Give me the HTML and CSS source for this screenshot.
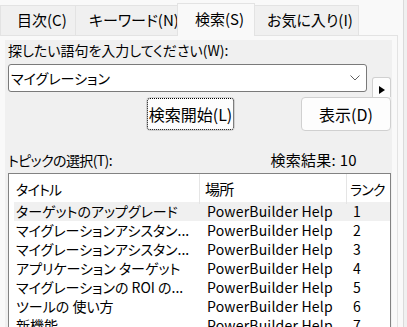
FILE: index.html
```html
<!DOCTYPE html>
<html lang="ja">
<head>
    <meta charset="UTF-8">
    <meta name="viewport" content="width=device-width, initial-scale=1.0">
    <title>ヘルプ検索</title>
    <link rel="stylesheet" href="styles.css">
</head>
<body>
<div class="dialog">
    <div class="tabs">
        <div class="tab">目次(C)</div>
        <div class="tab">キーワード(N)</div>
        <div class="tab active">検索(S)</div>
        <div class="tab">お気に入り(I)</div>
    </div>
    <div class="page">
        <div class="content">
            <label class="caption" for="word">探したい語句を入力してください(W):</label>
            <div class="search-row">
                <div class="combo" id="word">
                    <span>マイグレーション</span>
                    <svg width="10" height="6" viewBox="0 0 10 6"><path d="M0.5 0.5 L5 5 L9.5 0.5" fill="none" stroke="#606060" stroke-width="1"/></svg>
                </div>
                <button class="more" type="button">
                    <svg width="6" height="8" viewBox="0 0 6 8"><polygon points="0,0 6,4 0,8" fill="#000"/></svg>
                </button>
            </div>
            <div class="actions">
                <button class="btn btn-search focused" type="button">検索開始(L)</button>
                <button class="btn btn-show" type="button">表示(D)</button>
            </div>
            <div class="topic-row">
                <span class="topic">トピックの選択(T):</span>
                <span class="count">検索結果: 10</span>
            </div>
            <div class="list">
                <div class="list-head">
                    <span class="col-title">タイトル</span>
                    <span class="col-place">場所</span>
                    <span class="col-rank">ランク</span>
                </div>
                <div class="row hot"><span>ターゲットのアップグレード</span><span>PowerBuilder Help</span><span>1</span></div>
                <div class="row"><span>マイグレーションアシスタン...</span><span>PowerBuilder Help</span><span>2</span></div>
                <div class="row"><span>マイグレーションアシスタン...</span><span>PowerBuilder Help</span><span>3</span></div>
                <div class="row"><span>アプリケーション ターゲット</span><span>PowerBuilder Help</span><span>4</span></div>
                <div class="row"><span>マイグレーションの ROI の...</span><span>PowerBuilder Help</span><span>5</span></div>
                <div class="row"><span>ツールの 使い方</span><span>PowerBuilder Help</span><span>6</span></div>
                <div class="row"><span>新機能</span><span>PowerBuilder Help</span><span>7</span></div>
            </div>
        </div>
    </div>
</div>
<div class="frame"></div>
</body>
</html>
```

FILE: styles.css
```css
* {
    box-sizing: border-box;
}

html, body {
    height: 100%;
}

body {
    margin: 0;
    display: flex;
    overflow: hidden;
    background-color: #f0f0f0;
    font-family: "Noto Sans CJK JP", sans-serif;
    font-size: 16px;
    font-feature-settings: "palt";
    color: #000;
    white-space: nowrap;
}

.dialog {
    flex: none;
    width: 404px;
    background-color: #f9f9f9;
    border-right: 1px solid #dadada;
}

.tabs {
    display: flex;
    align-items: flex-end;
    height: 35px;
    font-size: 15px;
}

.tab {
    height: 30px;
    margin-right: -1px;
    border: 1px solid #e3e3e3;
    border-bottom: none;
    background-color: #f0f0f0;
    line-height: 28px;
}

.tab:nth-child(1) { width: 76px; padding-left: 16px; }
.tab:nth-child(2) { width: 103px; padding-left: 13px; }
.tab:nth-child(3) { width: 78px; padding-left: 17px; }
.tab:nth-child(4) { width: 105px; padding-left: 12px; }

.tab.active {
    position: relative;
    z-index: 1;
    height: 33px;
    margin-bottom: -1px;
    background-color: #f9f9f9;
    line-height: 30px;
}

.page {
    width: 398px;
    height: 400px;
    padding: 4px 5px 0 5px;
    border-top: 1px solid #e3e3e3;
    border-right: 1px solid #e3e3e3;
}

.content {
    height: 100%;
    padding: 0 1px 0 3px;
    background-color: #f0f0f0;
}

.caption {
    display: block;
    font-size: 14px;
    line-height: 20px;
}

.search-row {
    display: flex;
    align-items: flex-start;
    margin-top: 4px;
}

.combo {
    display: flex;
    align-items: center;
    justify-content: space-between;
    width: 360px;
    height: 28px;
    padding: 0 6px 0 2px;
    border: 1px solid #7a7a7a;
    border-radius: 3px;
    background-color: #fff;
    font-size: 14px;
}

.more {
    display: flex;
    align-items: flex-end;
    justify-content: center;
    width: 19px;
    height: 20px;
    margin: 13px 0 0 5px;
    padding: 0 0 3px 0;
    border: 1px solid #d0d0d0;
    border-bottom: none;
    border-radius: 3px 3px 0 0;
    background-color: #fdfdfd;
}

.actions {
    display: flex;
    justify-content: flex-end;
    gap: 66px;
}

.btn {
    height: 34px;
    padding: 0;
    border: 1px solid #d0d0d0;
    border-radius: 4px;
    background-color: #fdfdfd;
    font: inherit;
    color: #000;
}

.btn-search { width: 89px; }
.btn-show { width: 90px; }

.btn.focused {
    outline: 1px dotted #000;
    outline-offset: -2px;
}

.topic-row {
    display: flex;
    align-items: baseline;
    margin-top: 19px;
    line-height: 20px;
}

.topic {
    font-size: 14px;
    letter-spacing: -0.6px;
}

.count {
    margin-left: auto;
    margin-right: 34px;
    font-size: 15px;
    letter-spacing: 0.3px;
}

.list {
    margin-top: 3px;
    border: 1px solid #828282;
    background-color: #fff;
    font-size: 14px;
}

.list-head {
    display: grid;
    grid-template-columns: 191px 147px 1fr;
    height: 28px;
    line-height: 30px;
}

.list-head span {
    border-right: 1px solid #e5e5e5;
    letter-spacing: -0.8px;
}

.list-head span:last-child {
    border-right: none;
}

.col-title { padding-left: 7px; }
.col-place { padding-left: 5px; font-size: 15px; }
.col-rank { padding-left: 3px; }

.row {
    display: grid;
    grid-template-columns: 185px 147px 1fr;
    height: 19px;
    margin-left: 5px;
    line-height: 19px;
}

.row span {
    overflow: hidden;
    text-overflow: ellipsis;
}

.row span:nth-child(1) { padding-left: 2px; }
.row span:nth-child(2) { padding-left: 8px; letter-spacing: 0.2px; }
.row span:nth-child(3) { padding-left: 7px; }

.row.hot {
    background-color: #f0f0f0;
}

.frame {
    flex: 1;
}
```
